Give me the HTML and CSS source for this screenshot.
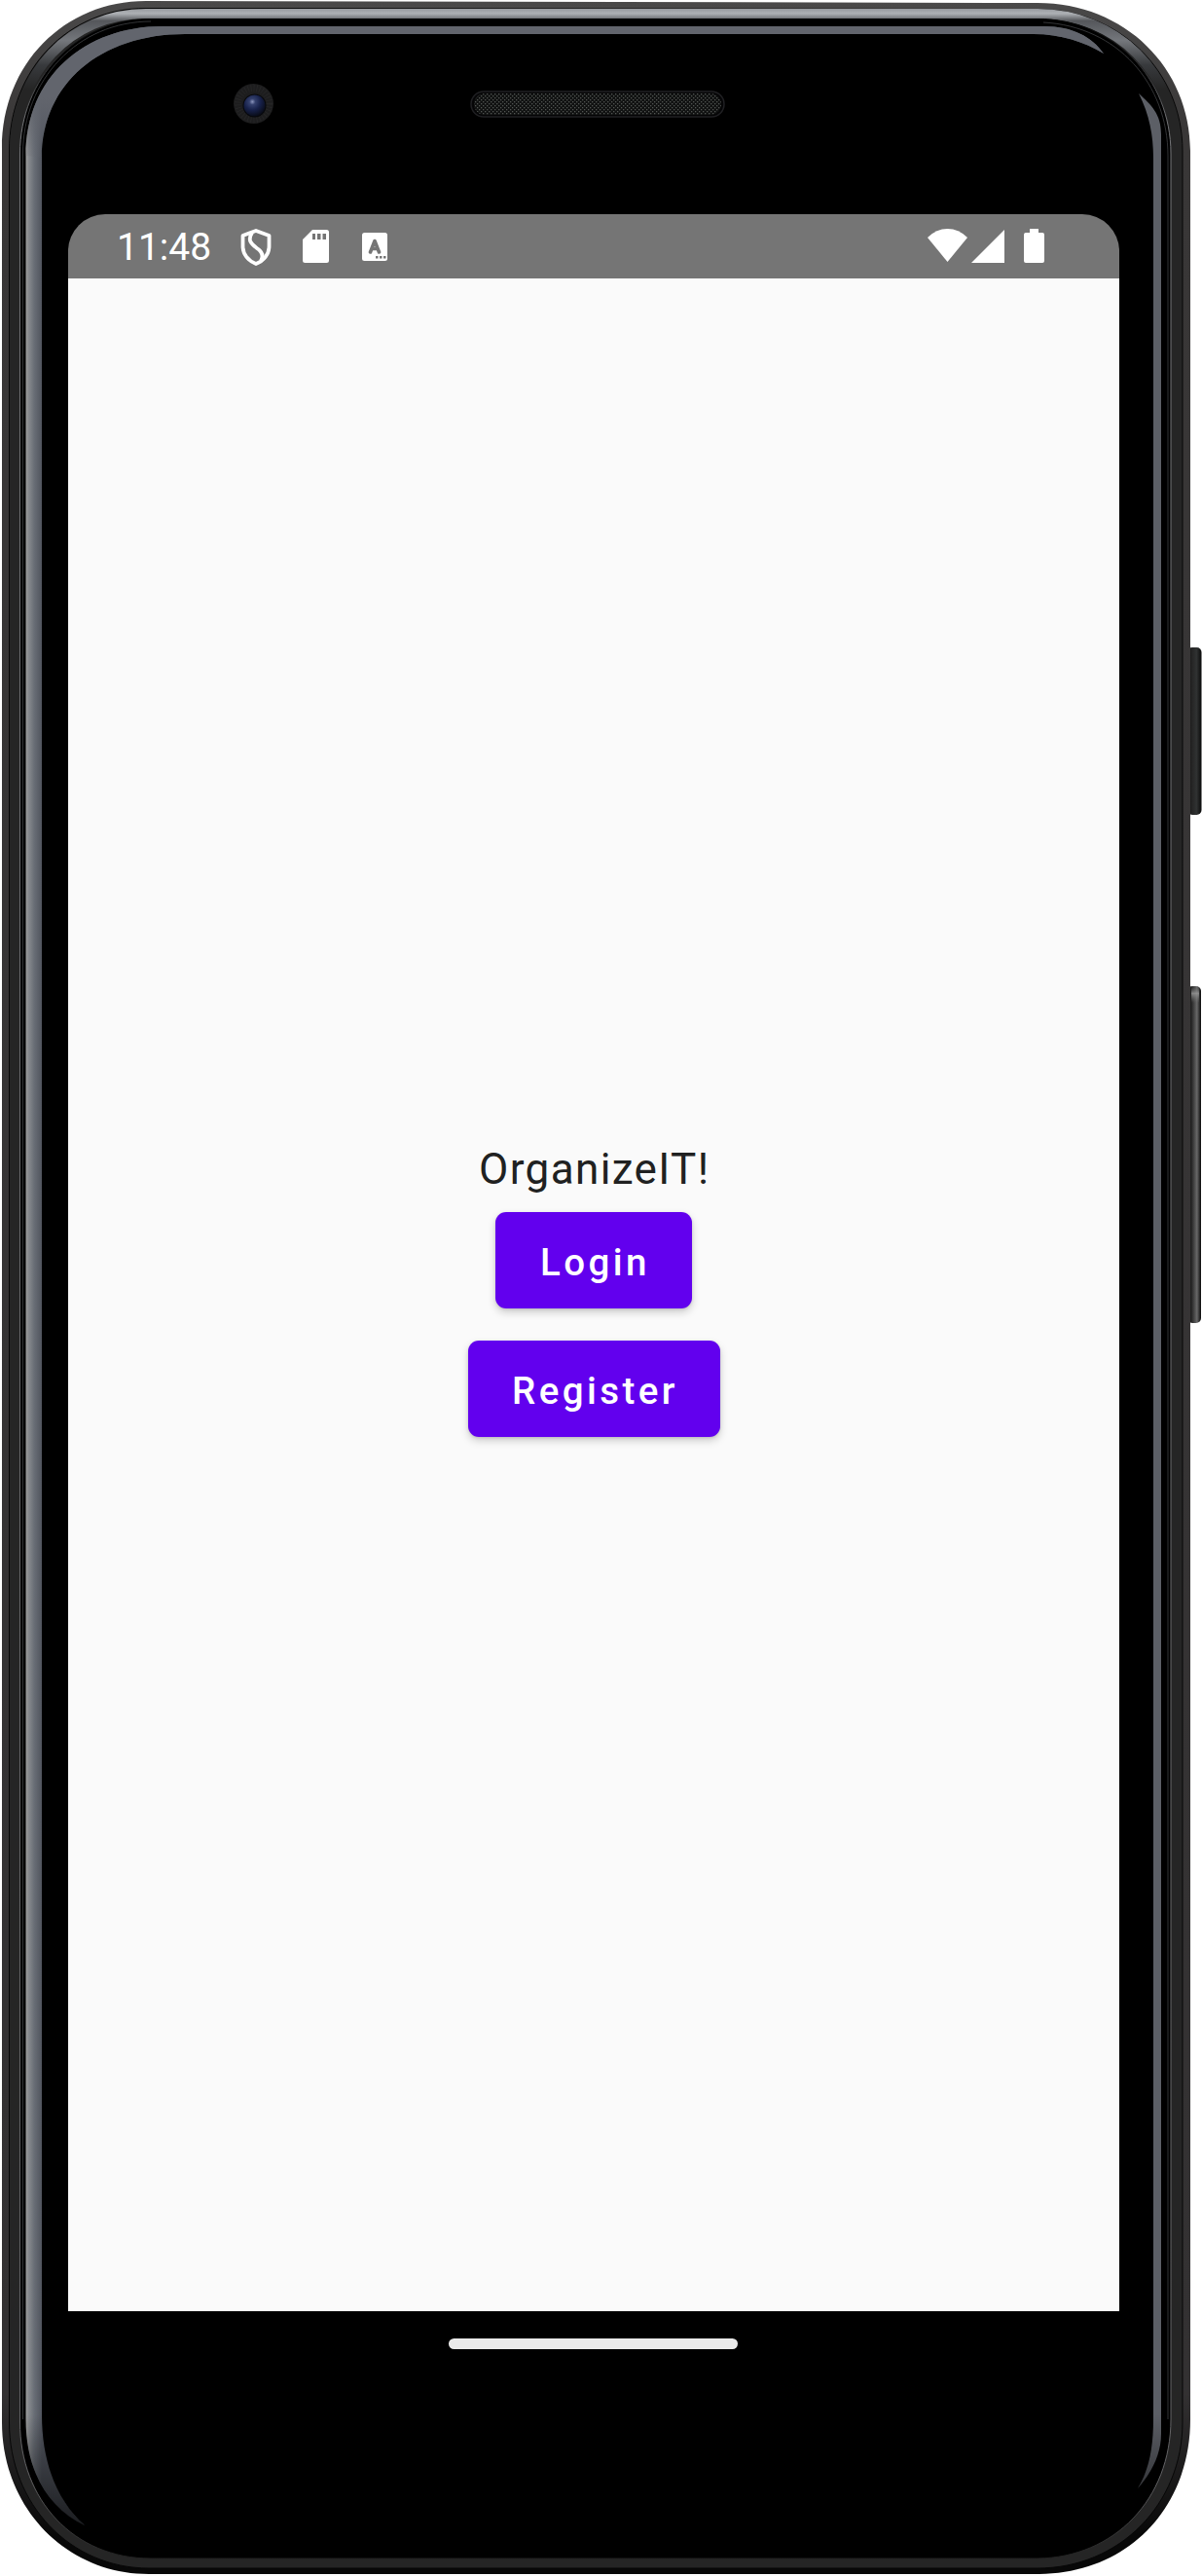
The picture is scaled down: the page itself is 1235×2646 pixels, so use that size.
FILE: index.html
```html
<!DOCTYPE html>
<html lang="en">
<head>
<meta charset="utf-8">
<title>OrganizeIT!</title>
<link rel="stylesheet" href="styles.css">
</head>
<body>
<div class="phone">
  <svg class="frame" viewBox="0 0 1235 2646" aria-hidden="true">
    <defs>
      <linearGradient id="rim" x1="0" y1="0" x2="0" y2="1"><stop offset="0" stop-color="#4a4949"/><stop offset=".05" stop-color="#393737"/><stop offset=".93" stop-color="#333132"/><stop offset=".985" stop-color="#080808"/></linearGradient>
      <linearGradient id="chrome" gradientUnits="userSpaceOnUse" x1="0" y1="8" x2="0" y2="92"><stop offset="0" stop-color="#92959a"/><stop offset=".07" stop-color="#aeb1b5"/><stop offset=".16" stop-color="#55575b"/><stop offset=".4" stop-color="#74777c"/><stop offset=".7" stop-color="#383a3d"/><stop offset="1" stop-color="#252525"/></linearGradient>
      <linearGradient id="line" x1="0" y1="0" x2="0" y2="1"><stop offset="0" stop-color="#000"/><stop offset=".02" stop-color="#303133"/><stop offset=".04" stop-color="#747578"/><stop offset=".97" stop-color="#626264"/><stop offset="1" stop-color="#202020"/></linearGradient>
      <linearGradient id="glossL" gradientUnits="userSpaceOnUse" x1="26" y1="0" x2="43" y2="0"><stop offset="0" stop-color="#a0a09f"/><stop offset=".22" stop-color="#85888c"/><stop offset=".55" stop-color="#686d75"/><stop offset="1" stop-color="#50545d"/></linearGradient>
      <linearGradient id="glossTop" gradientUnits="userSpaceOnUse" x1="0" y1="170" x2="0" y2="100"><stop offset="0" stop-color="#62656d" stop-opacity="0"/><stop offset="1" stop-color="#62656d"/></linearGradient>
      <linearGradient id="fade" gradientUnits="userSpaceOnUse" x1="0" y1="2480" x2="0" y2="2594"><stop offset="0" stop-opacity="0"/><stop offset="1" stop-opacity=".65"/></linearGradient>
      <linearGradient id="key" x1="0" y1="0" x2="1" y2="0"><stop offset="0" stop-color="#080808"/><stop offset=".3" stop-color="#242424"/><stop offset=".65" stop-color="#303232"/><stop offset="1" stop-color="#080808"/></linearGradient>
      <linearGradient id="keyLight" x1="0" y1="0" x2="1" y2="0"><stop offset="0" stop-color="#080808"/><stop offset=".3" stop-color="#252525"/><stop offset=".7" stop-color="#686868"/><stop offset="1" stop-color="#080808"/></linearGradient>
      <linearGradient id="keyTop" x1="0" y1="0" x2="0" y2="1"><stop offset="0" stop-color="#777" stop-opacity="0"/><stop offset=".4" stop-color="#999" stop-opacity=".8"/><stop offset="1" stop-color="#777" stop-opacity="0"/></linearGradient>
      <pattern id="mesh" width="4" height="4" patternUnits="userSpaceOnUse"><rect width="4" height="4" fill="#101111"/><rect width="1.3" height="1.3" fill="#525552"/><rect x="2" y="2" width="1.3" height="1.3" fill="#525552"/></pattern>
      <radialGradient id="lens" cx=".4" cy=".32" r=".7"><stop offset="0" stop-color="#8c96bd"/><stop offset=".2" stop-color="#34406d"/><stop offset=".55" stop-color="#17214a"/><stop offset="1" stop-color="#080b16"/></radialGradient>
    </defs>
    <rect x="1220" y="665" width="14.5" height="172" rx="5" fill="url(#key)"/>
    <rect x="1220" y="1013" width="14" height="346" rx="5" fill="url(#keyLight)"/>
    <rect x="1224" y="1014" width="8" height="16" fill="url(#keyTop)"/>
    <path fill="url(#rim)" d="M150 1C66 1 2 66 2 152V2488C2 2576 68 2644 153 2644H1068C1160 2643 1223 2575 1223 2485V155C1223 70 1156 3 1066 3Z"/>
    <path fill="#252525" stroke="#070707" d="M150 8.500C70 8.500 9.500 71 9.500 155V2488C9.500 2572 72 2638 153 2638H1066C1150 2638 1215 2572 1215 2488V155C1215 73 1150 9.500 1066 9.500Z"/>
    <path fill="none" stroke="url(#chrome)" stroke-width="10" d="M15 155C15 76 72 14 150 14H1066C1147 14 1209 76 1209 155"/>
    <path fill="#000" stroke="url(#line)" d="M155 19.500C79 19.500 20.500 80 20.500 158V2488C20.500 2568 76 2628 155 2628H1066C1145 2627 1203 2567 1203 2485V158C1203 80 1144 19.500 1066 19.500Z"/>
    <path fill="none" stroke="#333436" d="M23.500 2485V158C23.500 82 80 22 155 22M1072 23C1148 27 1200 86 1200 160V2485"/>
    <path fill="url(#glossL)" d="M167 27C87 27 26.500 79 26.500 160V2485C26.500 2540 51 2577 87 2594C60 2570 43 2532 43 2480V162C43 86 103 35 190 35H1062C1090 35 1114 43 1134 55C1122 38 1102 27 1073 27Z"/>
    <path fill="url(#glossTop)" d="M167 27C87 27 26.500 79 26.500 160L43 162C43 86 103 35 190 35H1062C1090 35 1114 43 1134 55C1122 38 1102 27 1073 27Z"/>
    <path fill="#5c5f66" d="M1170 96C1181 118 1185 139 1185 162V2485C1185 2516 1180 2538 1169 2556C1183 2540 1193 2521 1193 2500V138C1193 117 1183 108 1170 96Z"/>
    <path fill="url(#fade)" d="M26 2480H44C44 2532 60 2570 88 2595C51 2578 26 2540 26 2480ZM1184 2480H1194V2500C1194 2521 1184 2541 1168 2558C1180 2538 1184 2516 1184 2480Z"/>
    <circle cx="260.500" cy="106.500" r="20.500" fill="#1d1d1e"/>
    <circle cx="260.500" cy="106.500" r="16" fill="none" stroke="#252526" stroke-width="7" stroke-dasharray="1 2"/>
    <circle cx="261.500" cy="108.500" r="12" fill="#07080b"/>
    <circle cx="261.500" cy="108.500" r="11" fill="url(#lens)"/>
    <rect x="484" y="94" width="260" height="26" rx="13" fill="#050506" stroke="#202023" stroke-width="1.500"/>
    <rect x="487" y="96" width="254" height="22" rx="11" fill="url(#mesh)"/>
  </svg>
  <main class="screen">
    <header class="status">
      <span class="clock">11:48</span>
      <svg class="shield" viewBox="0 0 32 38"><path d="M16 2 29.500 7V18C29.500 26 24 33 16 36C8 33 2.500 26 2.500 18V7Z"/><path d="M12 4C7 12 11 15 17 20C23 24 24 28 21 33"/></svg>
      <svg class="card" viewBox="0 0 27 34"><path fill-rule="evenodd" d="M10 0H24.500Q27 0 27 2.500V31.500Q27 34 24.500 34H2.500Q0 34 0 31.500V10ZM10 4V10H13V4ZM15 4V10H18.500V4ZM20.500 4V10H24V4Z"/></svg>
      <svg class="letter" viewBox="0 0 26 29"><rect width="26" height="29" rx="2.500"/><path class="cut" d="M8.500 20 13 8.500 17.500 20M10 16.500H16"/><path class="dots" d="M14 24h2.500v2.500h-2.500zM18 24h2.500v2.500h-2.500zM22 24h2.500v2.500h-2.500z"/></svg>
      <svg class="wifi" viewBox="0 0 41 34"><path d="M0 9Q9 0 20.500 0T41 9L20.500 34Z"/></svg>
      <svg class="signal" viewBox="0 0 34 34"><path d="M34 0V34H0Z"/></svg>
      <svg class="battery" viewBox="0 0 21 35"><path d="M6 0H15V4H19Q21 4 21 6V33Q21 35 19 35H2Q0 35 0 33V6Q0 4 2 4H6Z"/></svg>
    </header>
    <section class="content">
      <h1 class="title">OrganizeIT!</h1>
      <button class="button login">Login</button>
      <button class="button register">Register</button>
    </section>
    <footer class="nav"><div class="handle"></div></footer>
  </main>
</div>
</body>
</html>
```
FILE: styles.css
```css
* { box-sizing: border-box; }
body { margin: 0; background: #fff; font-family: Roboto, sans-serif; }
.phone { position: relative; width: 1235px; height: 2646px; padding: 220px 85px 0 70px; overflow: hidden; }
.frame { position: absolute; inset: 0; width: 1235px; height: 2646px; }
.screen { position: relative; display: flex; flex-direction: column; width: 1080px; height: 2220px; }
.status { display: flex; flex: none; align-items: flex-start; height: 66px; padding: 15px 77px 0 50px; background: #757575; border-radius: 38px 38px 0 0; color: #fff; }
.status svg { display: block; flex: none; fill: #fff; }
.clock { width: 127px; margin-top: -3px; font-size: 39px; line-height: 45px; }
.status .shield { width: 32px; height: 38px; fill: none; stroke: #fff; stroke-width: 3.8; stroke-linejoin: round; }
.card { width: 27px; height: 34px; margin: 1px 0 0 32px; }
.letter { width: 26px; height: 29px; margin: 4px auto 0 34px; }
.letter .cut { fill: none; stroke: #757575; stroke-width: 3.6; stroke-linecap: round; stroke-linejoin: round; }
.letter .dots { fill: #757575; }
.wifi { width: 41px; height: 34px; }
.signal { width: 34px; height: 34px; margin: 1px 20px 0 4px; }
.battery { width: 21px; height: 35px; }
.content { display: flex; flex: none; flex-direction: column; align-items: center; height: 2088px; padding-top: 889px; background: #fafafa; }
.title { margin: 0 0 18px; padding-left: 1.5px; color: #202121; font-size: 44px; font-weight: 400; line-height: 52px; letter-spacing: 1.375px; }
.button { height: 99px; padding: 3px 0 0 3px; border: 0; border-radius: 11px; background: #6200ee; color: #fff; font: 500 38.5px/45px Roboto, sans-serif; letter-spacing: 3.4375px; box-shadow: 0 4px 8px rgba(0, 0, 0, .18), 0 1px 3px rgba(0, 0, 0, .12); }
.login { width: 202px; margin-bottom: 33px; }
.register { width: 259px; }
.nav { display: flex; flex: 1; align-items: center; justify-content: center; padding-right: 2px; background: #000; }
.handle { width: 297px; height: 11px; border-radius: 6px; background: #eaeaea; }
```
